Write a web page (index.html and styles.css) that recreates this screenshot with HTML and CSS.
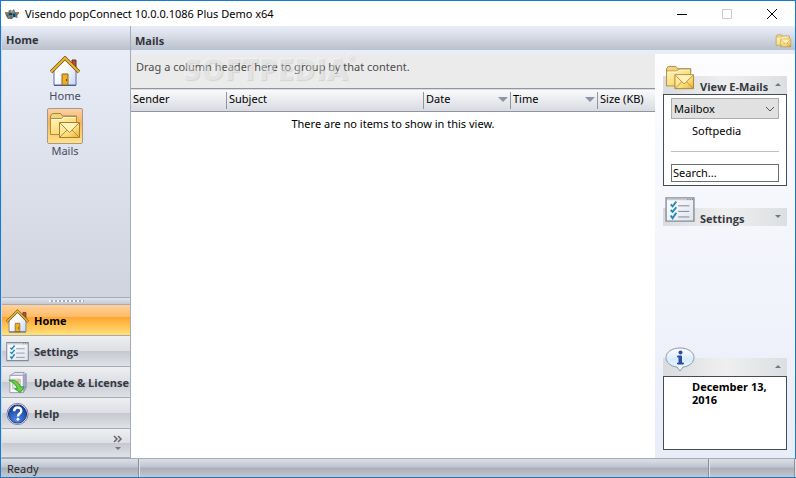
FILE: index.html
```html
<!DOCTYPE html>
<html lang="en">
  <head>
    <meta charset="UTF-8" />
    <meta name="viewport" content="width=device-width, initial-scale=1.0" />
    <title>Visendo popConnect</title>
    <link rel="stylesheet" href="styles.css">
  </head>
  <body>
    <!-- Shared icons -->
    <svg class="sprite" aria-hidden="true">
      <defs>
        <linearGradient id="folder-fill" x1="0" y1="0" x2="1" y2="1">
          <stop offset="0" stop-color="#fff6c4" />
          <stop offset="0.6" stop-color="#fcdc78" />
          <stop offset="1" stop-color="#e9b034" />
        </linearGradient>
        <linearGradient id="wall-fill" x1="0" y1="0" x2="1" y2="1">
          <stop offset="0.4" stop-color="#ffffff" />
          <stop offset="1" stop-color="#c9d6f0" />
        </linearGradient>
        <linearGradient id="sheet-fill" x1="0" y1="0" x2="1" y2="1">
          <stop offset="0" stop-color="#ffffff" />
          <stop offset="1" stop-color="#dfe4ec" />
        </linearGradient>
        <radialGradient id="help-fill" cx="0.45" cy="0.85" r="0.8">
          <stop offset="0" stop-color="#4f8ae8" />
          <stop offset="1" stop-color="#143a9c" />
        </radialGradient>
        <linearGradient id="bubble-fill" x1="0" y1="0" x2="0" y2="1">
          <stop offset="0" stop-color="#ffffff" />
          <stop offset="0.5" stop-color="#d9ecfa" />
          <stop offset="1" stop-color="#f4fbff" />
        </linearGradient>
      </defs>
      <symbol id="icon-house" viewBox="1 1 30 30">
        <path d="M23 12V5h4v11z" fill="#b4513c" stroke="#6d2f26" />
        <path d="M5 15L16 4l11 11v15H5z" fill="url(#wall-fill)" stroke="#5c6fa0" />
        <path d="M2 17L16 3l14 14" fill="none" stroke="#6b5320" stroke-width="3.5" />
        <path d="M2 17L16 3l14 14" fill="none" stroke="#efb62c" stroke-width="2" />
        <path d="M13 30V19h6v11z" fill="#efaf1f" stroke="#8b6a25" />
        <path d="M17 24h1v2h-1z" fill="#5d4312" />
        <path d="M5 30.5h22" stroke="#4b5e91" />
      </symbol>
      <symbol id="icon-mails" viewBox="0 0 32 28">
        <path d="M1.500 22.500V4l2-2.500h8l2 2.500h14v4z" fill="#f3d37c" stroke="#a58640" />
        <path d="M1.500 22.500v-16h11l2-2h13v18z" fill="url(#folder-fill)" stroke="#b08f42" />
        <path d="M2.500 7.500h11l2-2h11" fill="none" stroke="#fffbe2" />
        <path d="M10.500 10.500h20v15h-20z" fill="url(#folder-fill)" stroke="#a5802e" />
        <path d="M11 25l7-7M30 25l-7-7" fill="none" stroke="#b8923f" />
        <path d="M11 11l9.500 9.500L30 11" fill="#fff3b8" stroke="#b08a38" />
      </symbol>
      <symbol id="icon-checks" viewBox="0 0 32 28">
        <path d="M1 1h30v25H1z" fill="url(#sheet-fill)" stroke="#858c97" stroke-width="1.5" />
        <path d="M2 2.500h28" stroke="#c6cbd2" stroke-width="2" />
        <path d="M24 2.500h1M26.500 2.500h1M29 2.500h1" stroke="#59616d" />
        <path d="M14 9.500h12M14 15.500h12M14 21.500h12" stroke="#777f96" />
        <path d="M6 8l2 2 4-5M6 14l2 2 4-5M6 20l2 3 4-6" fill="none" stroke="#2187bd" stroke-width="2" />
      </symbol>
      <symbol id="icon-update" viewBox="0 0 24 24">
        <path d="M5 4l4-3h10l-1 4z" fill="#e2e4f1" stroke="#9697af" />
        <path d="M18 5l3-3v15l-3 5z" fill="#a5a8c8" stroke="#8a8eb0" />
        <path d="M4 4h14v18H4z" fill="#f8f8fb" stroke="#9b9caf" />
        <path d="M7 8h8v10H7z" fill="#dceade" stroke="#b8c7bc" />
        <circle cx="13" cy="10" r="2" fill="#f3b78c" />
        <path d="M3 9c7-1 11 3 12 7h4l-4 6-6-4h3c-1-4-4-6-9-9z" fill="#69cf43" stroke="#2f9a2c" />
      </symbol>
      <symbol id="icon-help" viewBox="0 0 24 24">
        <circle cx="12" cy="12" r="11" fill="#f6f8fd" stroke="#6d7690" />
        <circle cx="12" cy="12" r="9.5" fill="url(#help-fill)" stroke="#173580" />
        <path d="M8.500 9c0-5 7.500-5 7.500-.5 0 3-3.500 3-3.500 6" fill="none" stroke="#fff" stroke-width="2.5" />
        <circle cx="12.5" cy="17.5" r="1.5" fill="#fff" />
      </symbol>
      <symbol id="icon-info" viewBox="0 0 32 26">
        <path d="M16 1c8 0 14 4 14 9.500 0 5-5 9-11 9.500l-3 4-3-4C7 19.500 2 15.500 2 10.500 2 5 8 1 16 1z" fill="url(#bubble-fill)" stroke="#879bb3" />
        <circle cx="16.5" cy="5.5" r="2" fill="#2b4ea5" />
        <path d="M13.500 9h4v7h2v1h-6v-1h1.500v-6h-1.500z" fill="#2b4ea5" stroke="#2b4ea5" />
      </symbol>
    </svg>

    <div class="window">
      <header class="titlebar">
        <svg class="app-icon" viewBox="0 0 14 12">
          <path d="M0 4l3 1 1-3 3 1 2-2 1 3 4 1-2 3 1 2-4-1-2 2-4 0-2-3z" fill="#4c7484" />
          <path d="M0 5h3M11 5h3M3 10l2-2M5 2l1 2" stroke="#b9783e" stroke-width="2" />
          <path d="M4 5h3v2H4zM8 6h2v3H8z" fill="#203d4d" />
          <path d="M6 4h3M7 8h1" stroke="#9fc4cb" />
        </svg>
        <h1>Visendo popConnect 10.0.0.1086 Plus Demo x64</h1>
        <div class="window-buttons">
          <button type="button" aria-label="Minimize"><svg viewBox="0 0 12 12"><path d="M1 6.500h10" /></svg></button>
          <button type="button" aria-label="Maximize" disabled><svg viewBox="0 0 12 12"><path d="M1.500 1.500h9v9h-9z" /></svg></button>
          <button type="button" aria-label="Close"><svg viewBox="0 0 12 12"><path d="M1 1l10 10M11 1L1 11" /></svg></button>
        </div>
      </header>

      <div class="workspace">
        <aside class="sidebar">
          <h2 class="pane-title sidebar-title">Home</h2>
          <div class="shortcuts">
            <button type="button" class="shortcut">
              <span class="shortcut-icon"><svg class="house"><use href="#icon-house" /></svg></span>
              Home
            </button>
            <button type="button" class="shortcut active">
              <span class="shortcut-icon"><svg class="mails"><use href="#icon-mails" /></svg></span>
              Mails
            </button>
          </div>
          <div class="splitter"><span class="grip"></span></div>
          <nav class="nav">
            <button type="button" class="nav-item active"><svg><use href="#icon-house" /></svg>Home</button>
            <button type="button" class="nav-item"><svg><use href="#icon-checks" /></svg>Settings</button>
            <button type="button" class="nav-item"><svg><use href="#icon-update" /></svg>Update &amp; License</button>
            <button type="button" class="nav-item"><svg><use href="#icon-help" /></svg>Help</button>
            <div class="nav-more">
              <button type="button" aria-label="Configure buttons">
                <svg viewBox="0 0 10 16"><path d="M1 1l3 3-3 3M5 1l3 3-3 3" fill="none" stroke="#666" stroke-width="1.5" /><path d="M2 12h6l-3 3z" fill="#777" /></svg>
              </button>
            </div>
          </nav>
        </aside>

        <main class="content">
          <div class="pane-title content-title">
            <h2>Mails</h2>
            <svg><use href="#icon-mails" /></svg>
          </div>
          <div class="content-body">
            <section class="mail-list">
              <div class="group-bar">
                Drag a column header here to group by that content.
                <span class="watermark" aria-hidden="true">SOFTPEDIA<sup>®</sup></span>
              </div>
              <table>
                <colgroup>
                  <col class="col-sender" />
                  <col />
                  <col class="col-date" />
                  <col class="col-date" />
                  <col class="col-size" />
                </colgroup>
                <thead>
                  <tr>
                    <th><span>Sender</span></th>
                    <th><span>Subject</span></th>
                    <th class="sorted"><span>Date</span></th>
                    <th class="sorted"><span>Time</span></th>
                    <th><span>Size (KB)</span></th>
                  </tr>
                </thead>
                <tbody>
                  <tr>
                    <td colspan="5">There are no items to show in this view.</td>
                  </tr>
                </tbody>
              </table>
            </section>

            <aside class="tasks">
              <section class="task">
                <button type="button" class="task-header">
                  <svg><use href="#icon-mails" /></svg>
                  <span>View E-Mails</span>
                  <i class="arrow up"></i>
                </button>
                <div class="task-body">
                  <select aria-label="Folder">
                    <option>Mailbox</option>
                  </select>
                  <a href="#">Softpedia</a>
                  <hr />
                  <input type="text" value="Search..." aria-label="Search" />
                </div>
              </section>
              <section class="task">
                <button type="button" class="task-header">
                  <svg><use href="#icon-checks" /></svg>
                  <span>Settings</span>
                  <i class="arrow down"></i>
                </button>
              </section>
              <section class="task task-info">
                <button type="button" class="task-header" aria-label="Information">
                  <svg><use href="#icon-info" /></svg>
                  <span></span>
                  <i class="arrow up"></i>
                </button>
                <div class="task-body date">December 13, 2016</div>
              </section>
            </aside>
          </div>
        </main>
      </div>

      <footer class="statusbar">
        <span class="status-text">Ready</span>
        <span class="status-main"></span>
        <span class="status-end"></span>
      </footer>
    </div>
  </body>
</html>
```

FILE: styles.css
```css
/* General Styles */
* {
  box-sizing: border-box;
}
body {
  margin: 0;
  font-family: "Noto Sans", "Open Sans", sans-serif;
  font-size: 11px;
  line-height: 14px;
  color: #000;
}
button,
input,
select {
  font: inherit;
  color: inherit;
}
button {
  padding: 0;
  border: none;
  background: none;
}
svg {
  display: block;
  flex: none;
}
h1,
h2 {
  margin: 0;
  font-size: inherit;
  font-weight: inherit;
}
.sprite {
  position: absolute;
  width: 0;
  height: 0;
}
.window {
  display: flex;
  flex-direction: column;
  min-height: 100vh;
  border: 1px solid #1979ca;
  background: #fff;
}
.pane-title,
.nav-item,
.task-header,
.task-body.date {
  font-family: "Open Sans", "Noto Sans", sans-serif;
  font-weight: bold;
}

/* Title bar */
.titlebar {
  display: flex;
  align-items: center;
  height: 25px;
  padding: 0 1px 0 4px;
}
.app-icon {
  width: 14px;
  height: 12px;
  margin-right: 6px;
}
.titlebar h1 {
  flex: 1;
}
.window-buttons {
  display: flex;
}
.window-buttons button {
  display: flex;
  justify-content: center;
  align-items: center;
  width: 45px;
  height: 25px;
}
.window-buttons svg {
  width: 12px;
  height: 12px;
  fill: none;
  stroke: #000;
}
.window-buttons button:disabled svg {
  stroke: #ccc;
}

/* Panes */
.workspace {
  display: flex;
  flex: 1;
  background: #e9edf8;
}
.pane-title {
  height: 24px;
  background: linear-gradient(#e9edf8, #e0e4ee 25%, #b9c1cc);
  color: #30343c;
}
.sidebar {
  display: flex;
  flex-direction: column;
  width: 130px;
  border-right: 1px solid #a5acb9;
  border-left: 1px solid #d0d8e8;
}
.sidebar-title {
  padding: 7px 4px 0;
}
.shortcuts {
  display: flex;
  flex-direction: column;
  flex: 1;
  align-items: center;
  gap: 5px;
  padding: 3px 2px 0 0;
  background: linear-gradient(#e9edf8, #cfd4df);
}
.shortcut {
  color: #454b58;
}
.shortcut-icon {
  display: flex;
  justify-content: center;
  align-items: center;
  width: 36px;
  height: 36px;
  margin: 0 auto;
  border: 1px solid transparent;
  border-radius: 2px;
}
.shortcut.active .shortcut-icon {
  border-color: #a59a88;
  background: linear-gradient(#fad3a8, #fbb35a 40%, #ffe28a);
}
.house {
  width: 30px;
  height: 30px;
}
.mails {
  width: 32px;
  height: 28px;
}

/* Navigation buttons */
.splitter {
  display: flex;
  justify-content: center;
  align-items: center;
  height: 8px;
  border: solid #a5acb9;
  border-width: 1px 0;
  background: linear-gradient(#e0e4ee, #c3c9d5);
}
.grip {
  width: 35px;
  height: 2px;
  background: repeating-linear-gradient(90deg, #f3f5fa 0 2px, #a5acb9 2px 4px);
}
.nav-item {
  display: flex;
  align-items: center;
  gap: 5px;
  width: 100%;
  height: 31px;
  padding: 1px 0 0 4px;
  border-bottom: 1px solid #a5acb9;
  background: linear-gradient(#eeeff1, #dddfe3 50%, #c5c8cf 50%, #e0e2e6);
  color: #343841;
  white-space: nowrap;
}
.nav-item svg {
  width: 23px;
  height: 24px;
}
.nav-item.active {
  background: linear-gradient(#ffd29b, #ffba67 40%, #ffa52f 40%, #ffe17b);
  color: #000;
}
.nav-more {
  display: flex;
  justify-content: flex-end;
  height: 29px;
  padding: 6px 7px 0 0;
  border-bottom: 1px solid #a5acb9;
  background: linear-gradient(#eeeff1, #dddfe3 50%, #c5c8cf 50%, #e0e2e6);
}
.nav-more button {
  height: 16px;
}
.nav-more svg {
  width: 10px;
  height: 16px;
}

/* Mail list */
.content {
  display: flex;
  flex: 1;
  flex-direction: column;
}
.content-title {
  display: flex;
  justify-content: space-between;
  padding: 8px 3px 0 4px;
}
.content-title svg {
  width: 17px;
  height: 14px;
}
.content-body {
  display: flex;
  flex: 1;
  margin-top: 4px;
}
.mail-list {
  flex: 1;
  background: #fff;
}
.group-bar {
  position: relative;
  height: 34px;
  padding: 6px 5px;
  background: #ebebeb;
  color: #4b4b4b;
}
.watermark {
  position: absolute;
  top: 0;
  left: 52px;
  color: rgba(255, 255, 255, 0.4);
  font-family: "Open Sans", sans-serif;
  font-size: 30px;
  font-weight: 800;
  line-height: 30px;
  text-shadow: 1px 1px 1px rgba(0, 0, 0, 0.1);
}
.watermark sup {
  font-size: 8px;
  line-height: 8px;
  vertical-align: top;
}
table {
  width: 100%;
  border-collapse: collapse;
  table-layout: fixed;
}
.col-sender {
  width: 96px;
}
.col-date {
  width: 87px;
}
.col-size {
  width: 57px;
}
thead tr {
  height: 23px;
  border: solid #8e96a3;
  border-width: 1px 0;
  background: linear-gradient(#fafafb, #d9dbe1);
}
th {
  padding: 0;
  font-weight: normal;
  text-align: left;
  white-space: nowrap;
}
th span {
  display: block;
  height: 17px;
  padding-left: 2px;
  border-right: 1px solid #8e96a3;
  line-height: 14px;
}
th:last-child span {
  border-right: none;
}
.sorted span {
  display: flex;
  justify-content: space-between;
  padding-right: 2px;
}
.sorted span::after {
  content: "";
  margin-top: 5px;
  height: 0;
  border: 5px solid transparent;
  border-top-color: #8e96a3;
  border-bottom: none;
}
td {
  padding: 5px 0;
  text-align: center;
}

/* Task panel */
.tasks {
  display: flex;
  flex-direction: column;
  gap: 10px;
  width: 140px;
  padding: 10px 8px 8px;
  background: linear-gradient(#fdfdff, #e9edf8);
}
.task-header {
  display: flex;
  align-items: flex-end;
  gap: 4px;
  width: 100%;
  height: 30px;
  padding: 0 6px 0 1px;
  background: linear-gradient(90deg, #d9dbde, #efefef 50%, #dcdfe2) bottom / 100% 18px no-repeat;
  color: #343841;
  text-align: left;
}
.task-header svg {
  width: 32px;
  height: 26px;
  margin-bottom: 3px;
}
.task-header span {
  flex: 1;
  white-space: nowrap;
}
.arrow {
  margin-bottom: 8px;
  border: 3px solid transparent;
}
.arrow.up {
  border-top: none;
  border-bottom-color: #777;
}
.arrow.down {
  border-top-color: #777;
  border-bottom: none;
}
.task-body {
  height: 92px;
  padding: 3px 7px;
  border: 1px solid #454b57;
  background: #fff;
}
.task-body select {
  display: block;
  width: 100%;
  height: 21px;
  padding: 0 2px;
  border: 1px solid #adadad;
  border-radius: 0;
  appearance: none;
  background: #e1e1e1 url("data:image/svg+xml,%3Csvg xmlns='http://www.w3.org/2000/svg' width='10' height='6'%3E%3Cpath d='M1 1l4 4 4-4' fill='none' stroke='%23555'/%3E%3C/svg%3E") right 3px center no-repeat;
}
.task-body a {
  display: block;
  margin: 5px 0 13px 21px;
  color: #000;
  text-decoration: none;
}
.task-body hr {
  margin: 0 0 12px;
  border: none;
  border-top: 1px solid #c2c2c2;
}
.task-body input {
  display: block;
  width: 100%;
  height: 18px;
  padding: 0 1px 1px;
  border: 1px solid #6f6f6f;
}
.task-info {
  margin-top: auto;
}
.task-body.date {
  height: 74px;
  padding-left: 28px;
  line-height: 13px;
}

/* Status bar */
.statusbar {
  display: flex;
  height: 19px;
  border-top: 1px solid #a5acb9;
  background: linear-gradient(#dcdfe6, #bfc4ce 45%, #a9afba 50%, #c3c8d0);
  color: #23262d;
}
.statusbar span {
  border-right: 1px solid #8b8f96;
  box-shadow: 1px 0 #dfe3ea;
}
.statusbar .status-text {
  width: 138px;
  padding: 3px 6px 0;
}
.status-main {
  flex: 1;
}
.status-end {
  width: 86px;
}
```
